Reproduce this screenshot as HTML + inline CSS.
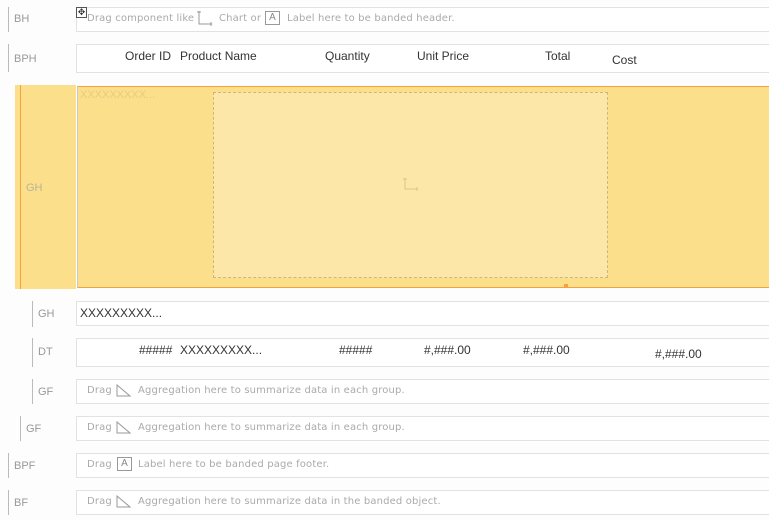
<!DOCTYPE html>
<html><head><meta charset="utf-8"><style>
body{margin:0;width:769px;height:520px;background:#fdfdfd;position:relative;overflow:hidden;font-family:"Liberation Sans",Arial,sans-serif;}
.a{position:absolute;}
.vl{position:absolute;width:1px;background:#bbb;}
.lb{position:absolute;font-size:11px;color:#999;}
.bx{position:absolute;left:76px;right:-2px;border:1px solid #e2e2e2;background:#fff;}
.h{position:absolute;font-size:12px;color:#333;}
.hint{position:absolute;font-family:"DejaVu Sans",Verdana,sans-serif;font-size:10px;color:#aaa;white-space:nowrap;letter-spacing:0.15px;}
.ic{position:absolute;}
</style></head><body>
<!-- BH -->
<div class="vl" style="left:8px;top:7px;height:25px"></div>
<div class="lb" style="left:14px;top:13px">BH</div>
<div class="bx" style="top:7px;height:23px"></div>
<div class="hint" style="left:87px;top:13px">Drag component like</div>
<div class="a" style="left:76px;top:7px;width:11px;height:11px;border:1px solid #555;box-sizing:border-box;background:#fff;font-size:9px;line-height:9px;text-align:center;color:#333">✥</div>
<svg class="ic" style="left:196px;top:9px" width="18" height="18"><path d="M3 2V15H16M1 3H5M15 13V17" stroke="#999" fill="none"/></svg>
<div class="hint" style="left:219px;top:13px">Chart or</div>
<div class="a" style="left:265px;top:11px;width:13px;height:12px;border:1px solid #999;font-size:10px;color:#888;text-align:center;line-height:12px">A</div>
<div class="hint" style="left:287px;top:13px">Label here to be banded header.</div>
<!-- BPH -->
<div class="vl" style="left:8px;top:44px;height:28px"></div>
<div class="lb" style="left:14px;top:53px">BPH</div>
<div class="bx" style="top:44px;height:27px"></div>
<div class="h" style="left:125px;top:49px">Order ID</div>
<div class="h" style="left:180px;top:49px">Product Name</div>
<div class="h" style="left:325px;top:49px">Quantity</div>
<div class="h" style="left:417px;top:49px">Unit Price</div>
<div class="h" style="left:545px;top:49px">Total</div>
<div class="h" style="left:612px;top:53px">Cost</div>
<!-- GH selected -->
<div class="a" style="left:15px;top:85px;width:61px;height:204px;background:#fbdf8a"></div>
<div class="a" style="left:20px;top:85px;width:1px;height:204px;background:#f7a23e"></div>
<div class="lb" style="left:26px;top:182px;color:#b9b39a">GH</div>
<div class="a" style="left:77px;top:86px;right:0;height:200px;background:#fbdf8a;border-top:1px solid #f7a23e;border-bottom:1px solid #f7a23e;border-left:1px solid #c9c9c9"></div>
<div class="a" style="left:80px;top:89px;font-size:11px;color:#e6cb84">XXXXXXXXX...</div>
<div class="a" style="left:213px;top:92px;width:393px;height:184px;border:1px dashed #cdb67a;background:#fce7a8"></div>
<svg class="ic" style="left:402px;top:176px" width="18" height="18"><path d="M3 2V13H16M1 3H5M15 11V15" stroke="#dcc68a" fill="none"/></svg>
<div class="a" style="left:564px;top:284px;width:4px;height:3px;background:#f7a23e"></div>
<!-- GH -->
<div class="vl" style="left:32px;top:301px;height:26px"></div>
<div class="lb" style="left:38px;top:308px">GH</div>
<div class="bx" style="top:301px;height:23px"></div>
<div class="a" style="left:80px;top:306px;font-size:12px;color:#333">XXXXXXXXX...</div>
<!-- DT -->
<div class="vl" style="left:32px;top:338px;height:29px"></div>
<div class="lb" style="left:38px;top:346px">DT</div>
<div class="bx" style="top:338px;height:27px"></div>
<div class="h" style="left:139px;top:343px">#####</div>
<div class="h" style="left:180px;top:343px">XXXXXXXXX...</div>
<div class="h" style="left:339px;top:343px">#####</div>
<div class="h" style="left:424px;top:343px">#,###.00</div>
<div class="h" style="left:523px;top:343px">#,###.00</div>
<div class="h" style="left:655px;top:347px">#,###.00</div>
<!-- GF -->
<div class="vl" style="left:32px;top:379px;height:25px"></div>
<div class="lb" style="left:38px;top:386px">GF</div>
<div class="bx" style="top:379px;height:23px"></div>
<div class="hint" style="left:87px;top:385px">Drag</div>
<svg class="ic" style="left:116px;top:384px" width="16" height="14"><path d="M1 1V12H14Z" stroke="#999" fill="none"/></svg>
<div class="hint" style="left:138px;top:385px">Aggregation here to summarize data in each group.</div>
<!-- GF -->
<div class="vl" style="left:20px;top:416px;height:25px"></div>
<div class="lb" style="left:26px;top:423px">GF</div>
<div class="bx" style="top:416px;height:23px"></div>
<div class="hint" style="left:87px;top:422px">Drag</div>
<svg class="ic" style="left:116px;top:421px" width="16" height="14"><path d="M1 1V12H14Z" stroke="#999" fill="none"/></svg>
<div class="hint" style="left:138px;top:422px">Aggregation here to summarize data in each group.</div>
<!-- BPF -->
<div class="vl" style="left:8px;top:453px;height:25px"></div>
<div class="lb" style="left:14px;top:460px">BPF</div>
<div class="bx" style="top:453px;height:23px"></div>
<div class="hint" style="left:87px;top:459px">Drag</div>
<div class="a" style="left:117px;top:457px;width:13px;height:12px;border:1px solid #999;font-size:10px;color:#888;text-align:center;line-height:12px">A</div>
<div class="hint" style="left:138px;top:459px">Label here to be banded page footer.</div>
<!-- BF -->
<div class="vl" style="left:8px;top:490px;height:25px"></div>
<div class="lb" style="left:14px;top:497px">BF</div>
<div class="bx" style="top:490px;height:23px"></div>
<div class="hint" style="left:87px;top:496px">Drag</div>
<svg class="ic" style="left:116px;top:495px" width="16" height="14"><path d="M1 1V12H14Z" stroke="#999" fill="none"/></svg>
<div class="hint" style="left:138px;top:496px">Aggregation here to summarize data in the banded object.</div>
</body></html>
